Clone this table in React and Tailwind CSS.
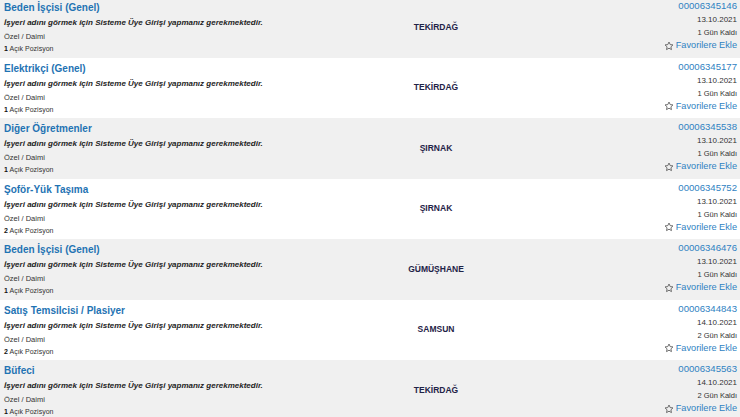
import React from "react";

const jobs = [
  { title: "Beden İşçisi (Genel)", city: "TEKİRDAĞ", no: "00006345146", date: "13.10.2021", left: "1 Gün Kaldı", count: 1 },
  { title: "Elektrikçi (Genel)", city: "TEKİRDAĞ", no: "00006345177", date: "13.10.2021", left: "1 Gün Kaldı", count: 1 },
  { title: "Diğer Öğretmenler", city: "ŞIRNAK", no: "00006345538", date: "13.10.2021", left: "1 Gün Kaldı", count: 1 },
  { title: "Şoför-Yük Taşıma", city: "ŞIRNAK", no: "00006345752", date: "13.10.2021", left: "1 Gün Kaldı", count: 2 },
  { title: "Beden İşçisi (Genel)", city: "GÜMÜŞHANE", no: "00006346476", date: "13.10.2021", left: "1 Gün Kaldı", count: 1 },
  { title: "Satış Temsilcisi / Plasiyer", city: "SAMSUN", no: "00006344843", date: "14.10.2021", left: "2 Gün Kaldı", count: 2 },
  { title: "Büfeci", city: "TEKİRDAĞ", no: "00006345563", date: "14.10.2021", left: "2 Gün Kaldı", count: 1 },
];

function StarIcon() {
  return (
    <svg width="10" height="10" viewBox="0 0 24 24" className="mr-[2px] inline-block">
      <path
        d="M12 2.5l2.9 6.1 6.6.8-4.9 4.6 1.3 6.6L12 17.3l-5.9 3.3 1.3-6.6-4.9-4.6 6.6-.8z"
        fill="none"
        stroke="#555"
        strokeWidth="2"
        strokeLinejoin="round"
      />
    </svg>
  );
}

function JobRow({ job, gray }) {
  return (
    <div className={`flex h-[60.5px] ${gray ? "bg-[#f0f0f0]" : "bg-white"}`}>
      <div className="w-[370px] pl-[4px] pt-[3px]">
        <div className="text-[10px] leading-[15px] font-bold text-[#1f73b3]">{job.title}</div>
        <div className="text-[8px] leading-[15px] font-bold italic text-[#1e1e1e] whitespace-nowrap">
          İşyeri adını görmek için Sisteme Üye Girişi yapmanız gerekmektedir.
        </div>
        <div className="text-[7.5px] leading-[13px] text-[#333]">Özel / Daimi</div>
        <div className="text-[7px] leading-[12px] text-[#333]">
          <span className="font-bold text-[#111]">{job.count}</span> Açık Pozisyon
        </div>
      </div>
      <div className="w-[132px] flex items-center justify-center">
        <span className="text-[8.5px] font-bold text-[#1f2347]">{job.city}</span>
      </div>
      <div className="flex-1 pr-[3px] pt-[2px] text-right">
        <div className="text-[9.6px] leading-[13px] text-[#2f82c2]">{job.no}</div>
        <div className="text-[8px] leading-[15px] text-[#333]">{job.date}</div>
        <div className="text-[7.5px] leading-[11px] text-[#333]">{job.left}</div>
        <div className="text-[9.2px] leading-[15px] text-[#2f82c2] flex items-center justify-end">
          <StarIcon />
          Favorilere Ekle
        </div>
      </div>
    </div>
  );
}

export default function App() {
  return (
    <div className="w-[740px] h-[417px] overflow-hidden bg-white font-['Liberation_Sans',Arial,sans-serif]">
      <div className="-mt-[3px]">
        {jobs.map((job, i) => (
          <JobRow key={job.no} job={job} gray={i % 2 === 0} />
        ))}
      </div>
    </div>
  );
}
